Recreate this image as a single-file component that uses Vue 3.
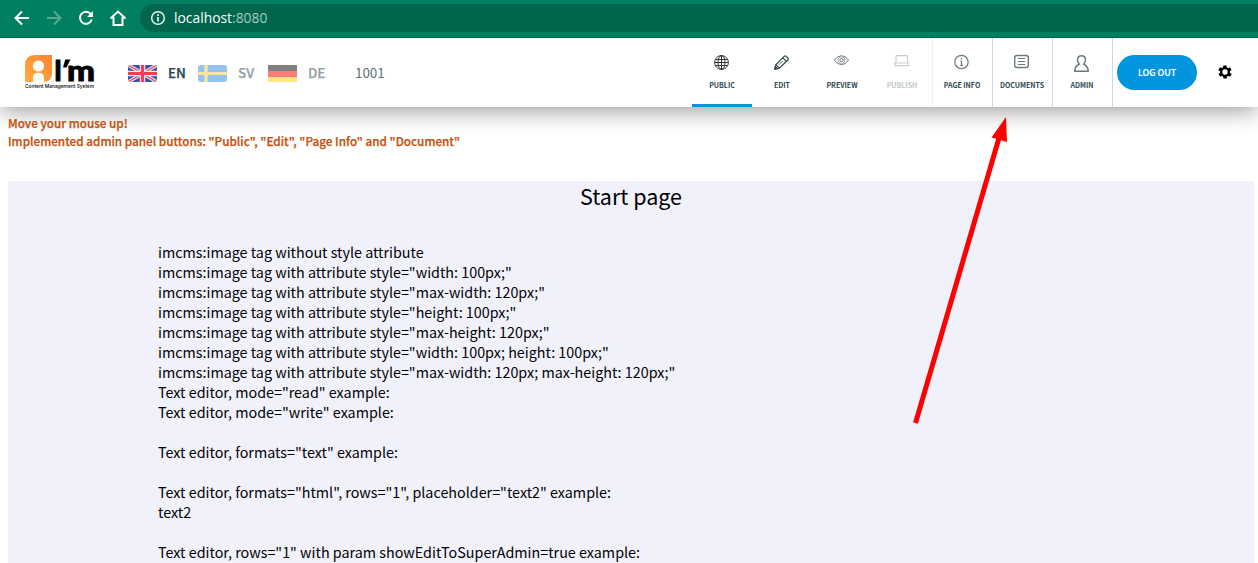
<script setup>
const languages = [
  { code: 'EN', flag: 'gb', active: true },
  { code: 'SV', flag: 'se', active: false },
  { code: 'DE', flag: 'de', active: false },
]

const tabs = [
  { label: 'PUBLIC', icon: 'globe', state: 'active' },
  { label: 'EDIT', icon: 'pencil', state: '' },
  { label: 'PREVIEW', icon: 'eye', state: '' },
  { label: 'PUBLISH', icon: 'laptop', state: 'disabled' },
  { label: 'PAGE INFO', icon: 'info', state: 'soft' },
  { label: 'DOCUMENTS', icon: 'list', state: 'split' },
  { label: 'ADMIN', icon: 'user', state: 'split' },
]

const lines = [
  'imcms:image tag without style attribute',
  'imcms:image tag with attribute style="width: 100px;"',
  'imcms:image tag with attribute style="max-width: 120px;"',
  'imcms:image tag with attribute style="height: 100px;"',
  'imcms:image tag with attribute style="max-height: 120px;"',
  'imcms:image tag with attribute style="width: 100px; height: 100px;"',
  'imcms:image tag with attribute style="max-width: 120px; max-height: 120px;"',
  'Text editor, mode="read" example:',
  'Text editor, mode="write" example:',
  '',
  'Text editor, formats="text" example:',
  '',
  'Text editor, formats="html", rows="1", placeholder="text2" example:',
  'text2',
  '',
  'Text editor, rows="1" with param showEditToSuperAdmin=true example:',
]
</script>

<template>
  <div class="screen">
    <div class="browser">
      <svg class="nav-icons" width="140" height="37" viewBox="0 0 140 37" fill="none" stroke="#fff" stroke-width="2">
        <path d="M29 18H16.5M22 11.5L15.5 18L22 24.5" />
        <path d="M47 18H59.500M54 11.500L60.500 18L54 24.500" stroke="#59a891" />
        <path d="M90.700 14A6 6 0 1 0 91.800 19.500" />
        <path d="M93 11V17H87Z" fill="#fff" stroke="none" />
        <path d="M110.500 18.500L118 11.500L125.500 18.500M113.500 17V25H122.500V17" />
      </svg>
      <div class="address">
        <svg width="16" height="16" viewBox="0 0 16 16" fill="none" stroke="#e8f2ef" stroke-width="1.500">
          <circle cx="8" cy="8" r="6.300" />
          <path d="M8 7V11.500M8 4.200V5.900" stroke-width="1.700" />
        </svg>
        <span class="url">localhost<span class="port">:8080</span></span>
      </div>
    </div>

    <header class="panel">
      <svg class="logo" width="72" height="42" viewBox="0 0 72 42">
        <defs>
          <linearGradient id="orange" x1="0" y1="1" x2="1" y2="0">
            <stop offset="0" stop-color="#ffae42" />
            <stop offset="1" stop-color="#ff8330" />
          </linearGradient>
        </defs>
        <path d="M11 1H28V19Q28 28 19 28H1V11Q1 1 11 1Z" fill="url(#orange)" />
        <circle cx="14.500" cy="12" r="5.600" fill="#fff" />
        <path d="M9 28V24Q9 18.800 14.500 18.800Q20 18.800 20 24V28Z" fill="#fff" />
        <text class="logo-name" x="30" y="27.300" textLength="8" lengthAdjust="spacingAndGlyphs">I</text>
        <path d="M41.200 5.500H46.500L42.500 13.500H39Z" />
        <text class="logo-name" x="43" y="27.300" textLength="28" lengthAdjust="spacingAndGlyphs">m</text>
        <text class="logo-sub" x="1" y="34" textLength="69" lengthAdjust="spacingAndGlyphs">Content Management System</text>
      </svg>

      <div class="languages">
        <div v-for="l in languages" :key="l.code" class="language" :class="{ off: !l.active }">
          <svg v-if="l.flag === 'gb'" class="flag" viewBox="0 0 29 17" preserveAspectRatio="none">
            <path d="M0 0H29V17H0Z" fill="#3855a8" />
            <path d="M0 0L29 17M29 0L0 17" stroke="#e4e7f1" stroke-width="3.600" />
            <path d="M0 0L29 17M29 0L0 17" stroke="#f0506a" stroke-width="1.400" />
            <path d="M14.500 0V17M0 8.500H29" stroke="#eee8f0" stroke-width="5.500" />
            <path d="M14.500 0V17M0 8.500H29" stroke="#fa3c55" stroke-width="3.200" />
          </svg>
          <svg v-else-if="l.flag === 'se'" class="flag" viewBox="0 0 29 17" preserveAspectRatio="none">
            <path d="M0 0H29V17H0Z" fill="#95c3ef" />
            <path d="M8 0V17M0 8.500H29" stroke="#ffe6a0" stroke-width="3.200" />
          </svg>
          <svg v-else class="flag square" viewBox="0 0 29 17" preserveAspectRatio="none">
            <path d="M0 0H29V6H0Z" fill="#808080" />
            <path d="M0 6H29V12H0Z" fill="#fa7d7d" />
            <path d="M0 12H29V17H0Z" fill="#ffe680" />
          </svg>
          <span class="code">{{ l.code }}</span>
        </div>
      </div>
      <span class="doc-id">1001</span>

      <nav class="tabs">
        <div v-for="t in tabs" :key="t.label" class="tab" :class="t.state">
          <svg class="tab-icon" width="18" height="20" viewBox="0 0 18 20" fill="none" stroke="#6c7a80" stroke-width="1.200">
            <g v-if="t.icon === 'globe'" stroke="#1e2528" stroke-width="0.900">
              <circle cx="8.500" cy="9.500" r="6.900" />
              <ellipse cx="8.500" cy="9.500" rx="3.500" ry="6.900" />
              <path d="M8.500 2.600V16.400M1.600 9.500H15.400M2.600 6.500H14.400M2.600 12.500H14.400" />
            </g>
            <g v-else-if="t.icon === 'pencil'" stroke="#35454c" stroke-width="1.200">
              <path d="M1.800 16.300L2.800 11.800L11.200 3.400Q12.200 2.400 13.200 3.400L14.800 5Q15.800 6 14.800 7L6.400 15.300Z" />
              <path d="M9.800 4.900L13.300 8.400M3 11.800L6.200 15" />
              <path d="M5.800 11.900L9.800 7.900" stroke-width="0.800" />
              <path d="M1.800 16.300L2.400 13.800L4.200 15.700Z" fill="#35454c" />
            </g>
            <g v-else-if="t.icon === 'eye'" stroke-width="1">
              <path d="M1.300 7.200Q8.500-1.800 15.700 7.200Q8.500 16.200 1.300 7.200Z" />
              <circle cx="8.500" cy="7.200" r="3.400" stroke="#a3adb1" />
              <circle cx="8.500" cy="7.200" r="1.600" />
            </g>
            <g v-else-if="t.icon === 'laptop'" stroke="#c9cdcf">
              <path d="M3 9.700V3.700Q3 2.600 4.100 2.600H13.400Q14.500 2.600 14.500 3.700V9.700" />
              <path d="M1.700 10H15.600V11.800Q15.600 12.700 14.700 12.700H2.600Q1.700 12.700 1.700 11.800Z" />
            </g>
            <g v-else-if="t.icon === 'info'">
              <circle cx="8.500" cy="9" r="6.700" />
              <path d="M8.500 7.800V12.300M7.100 12.500H10M7.300 8H8.500M8.500 4.900V6.400" />
            </g>
            <g v-else-if="t.icon === 'list'">
              <rect x="1.700" y="2.500" width="13.600" height="12" rx="2.300" stroke-width="1.400" />
              <path d="M4.700 5.500H12.300M4.700 8.500H12.300M4.700 11.500H12.300" />
            </g>
            <g v-else stroke-width="1.500">
              <path d="M6.300 11Q4.300 9 4.500 6.500Q4.800 2.700 8.500 2.700Q12.200 2.700 12.500 6.500Q12.700 9 10.700 11Q15.200 13.300 15.200 18.300H1.800Q1.800 13.300 6.300 11Z" />
            </g>
          </svg>
          <span class="tab-label">{{ t.label }}</span>
        </div>
      </nav>
      <div class="logout">LOG OUT</div>
      <svg class="gear" width="16" height="16" viewBox="0 0 24 24">
        <path fill-rule="evenodd" d="M19.400 13a7.800 7.800 0 0 0 0-2l2.100-1.600a.5.500 0 0 0 .1-.6l-2-3.500a.5.500 0 0 0-.6-.2l-2.500 1a7.300 7.300 0 0 0-1.700-1l-.4-2.600a.5.500 0 0 0-.5-.4h-4a.5.500 0 0 0-.5.400l-.4 2.600a7.600 7.600 0 0 0-1.700 1l-2.500-1a.5.500 0 0 0-.6.200l-2 3.500a.5.500 0 0 0 .1.600L4.600 11a8 8 0 0 0 0 2l-2.100 1.600a.5.500 0 0 0-.1.600l2 3.500c.1.200.4.300.6.200l2.500-1c.5.400 1.100.7 1.700 1l.4 2.600c0 .2.200.4.500.4h4c.2 0 .5-.2.500-.4l.4-2.600a7.300 7.300 0 0 0 1.700-1l2.500 1c.2.100.5 0 .6-.2l2-3.500a.5.500 0 0 0-.1-.6ZM12 16a4 4 0 1 1 0-8 4 4 0 0 1 0 8Z" />
      </svg>
    </header>

    <main class="page">
      <div class="notice">
        <div>Move your mouse up!</div>
        <div>Implemented admin panel buttons: "Public", "Edit", "Page Info" and "Document"</div>
      </div>
      <section class="content">
        <h1>Start page</h1>
        <div class="lines">
          <div v-for="(line, i) in lines" :key="i" class="line">{{ line }}</div>
        </div>
      </section>
    </main>

    <svg class="arrow" width="1258" height="563" viewBox="0 0 1258 563">
      <path d="M915.500 423L999 138" stroke="#f00" stroke-width="5" />
      <path d="M1006 117L1007 142L991.500 137.500Z" fill="#f00" />
    </svg>
  </div>
</template>

<style>
body {
  margin: 0;
  overflow: hidden;
}
</style>

<style scoped>
.screen {
  position: relative;
  width: 1258px;
  height: 563px;
  overflow: hidden;
  background: #fff;
  font-family: "Noto Sans CJK SC", "Noto Sans", sans-serif;
}
.browser {
  position: relative;
  z-index: 2;
  display: flex;
  box-sizing: border-box;
  height: 38px;
  background: #008060;
  border-bottom: 1px solid #006349;
}
.nav-icons {
  flex: none;
}
.address {
  display: flex;
  align-items: center;
  flex: 1;
  height: 28px;
  margin-top: 4px;
  padding-left: 10px;
  background: #00664d;
  border-radius: 14px 0 0 14px;
}
.url {
  margin-left: 8px;
  color: #fff;
  font: 13.850px/20px "Open Sans", sans-serif;
}
.port {
  color: #a6cbc1;
}
.panel {
  position: relative;
  display: flex;
  height: 69px;
  background: #fff;
  box-shadow: 0 2px 25px rgba(0, 0, 0, 0.45);
  z-index: 1;
}
.logo {
  flex: none;
  margin: 16px 0 0 24px;
  overflow: visible;
}
.logo-name {
  font: 900 28px "Lato", sans-serif;
  stroke: #000;
  stroke-width: 0.8;
}
.logo-sub {
  font: 500 5.400px "Inter", sans-serif;
}
.languages {
  display: flex;
  height: 69px;
  margin-left: 32px;
}
.language {
  display: flex;
  align-items: center;
  width: 70px;
}
.flag {
  width: 29px;
  height: 17px;
  margin-top: 2px;
  border-radius: 3px;
}
.flag.square {
  border-radius: 0;
}
.code {
  margin: -1px 0 0 11px;
  color: #23414d;
  font-size: 13.400px;
  font-weight: 500;
  -webkit-text-stroke: 0.250px currentColor;
}
.off .code {
  color: #919fa6;
}
.doc-id {
  width: 32px;
  margin-left: 17px;
  color: #5b717b;
  font-size: 13.400px;
  line-height: 69px;
}
.tabs {
  display: flex;
  margin-left: auto;
  margin-right: 4px;
  border-right: 1px solid #d0d5df;
}
.tab {
  display: flex;
  flex-direction: column;
  align-items: center;
  width: 60px;
}
.tab.active {
  box-shadow: inset 0 -3px #0095dd;
}
.tab.soft {
  box-shadow: inset 1px 0 #eceef2;
}
.tab.split {
  box-shadow: inset 1px 0 #d0d5df;
}
.tab-icon {
  margin-top: 15px;
}
.tab-label {
  margin-top: 7px;
  color: #2e4751;
  font-size: 7px;
  font-weight: 700;
  line-height: 10px;
  white-space: nowrap;
}
.disabled .tab-label {
  color: #c3c8cb;
}
.logout {
  width: 80px;
  height: 35px;
  margin-top: 17px;
  border-radius: 18px;
  background: #0095dd;
  color: #fff;
  font-size: 8.900px;
  font-weight: 500;
  line-height: 35px;
  text-align: center;
  -webkit-text-stroke: 0.200px currentColor;
}
.gear {
  margin: 26px 25.500px 0 19.500px;
}
.page {
  padding: 7px 4px 0 8px;
}
.notice {
  position: relative;
  z-index: 2;
  height: 67px;
  color: #c5500c;
  font-size: 11.720px;
  font-weight: 500;
  line-height: 18px;
  -webkit-text-stroke: 0.250px currentColor;
}
.content {
  height: 382px;
  background: #f1f1fc;
  color: #000;
}
h1 {
  margin: 0;
  font-size: 21.500px;
  font-weight: 400;
  line-height: 29px;
  text-align: center;
}
.lines {
  padding: 32px 0 0 150px;
}
.line {
  height: 20px;
  font-size: 14.330px;
  line-height: 20px;
  white-space: nowrap;
}
.arrow {
  position: absolute;
  top: 0;
  left: 0;
  z-index: 3;
}
</style>
